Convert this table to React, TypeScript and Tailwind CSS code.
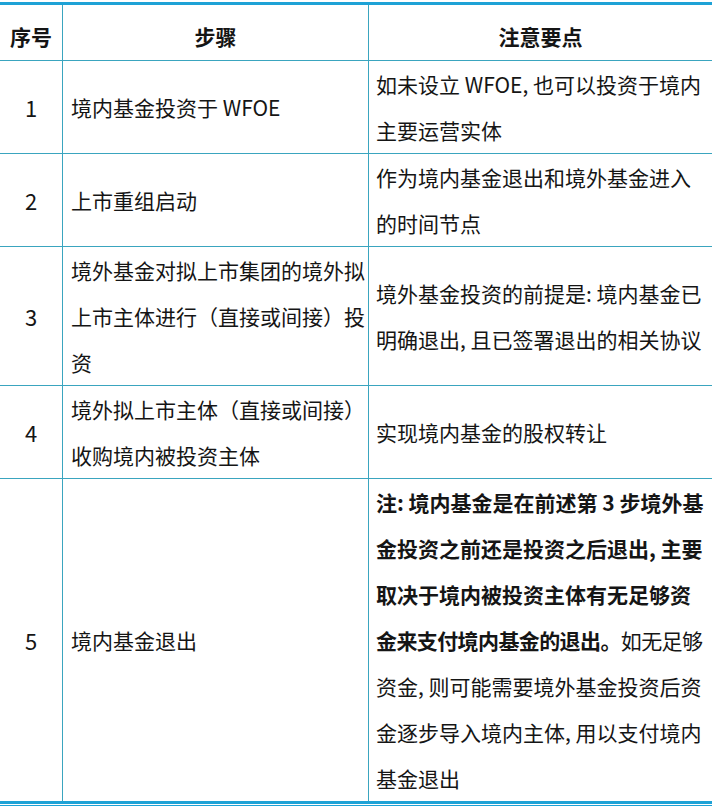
import React from "react";

const font = { fontFamily: '"Noto Sans CJK SC", "Noto Sans", sans-serif' };

function Lines({ lines }: { lines: React.ReactNode[] }) {
  return (
    <div>
      {lines.map((l, i) => (
        <div key={i} className="whitespace-nowrap">
          {l}
        </div>
      ))}
    </div>
  );
}

type Row = { n: string; step: React.ReactNode[]; note: React.ReactNode[] };

const rows: Row[] = [
  {
    n: "1",
    step: ["境内基金投资于 WFOE"],
    note: ["如未设立 WFOE, 也可以投资于境内", "主要运营实体"],
  },
  {
    n: "2",
    step: ["上市重组启动"],
    note: ["作为境内基金退出和境外基金进入", "的时间节点"],
  },
  {
    n: "3",
    step: ["境外基金对拟上市集团的境外拟", "上市主体进行（直接或间接）投", "资"],
    note: ["境外基金投资的前提是: 境内基金已", "明确退出, 且已签署退出的相关协议"],
  },
  {
    n: "4",
    step: ["境外拟上市主体（直接或间接）", "收购境内被投资主体"],
    note: ["实现境内基金的股权转让"],
  },
  {
    n: "5",
    step: ["境内基金退出"],
    note: [
      <span className="font-bold">注: 境内基金是在前述第 3 步境外基</span>,
      <span className="font-bold">金投资之前还是投资之后退出, 主要</span>,
      <span className="font-bold">取决于境内被投资主体有无足够资</span>,
      <span className="tracking-[-0.6px]">
        <span className="font-bold">金来支付境内基金的退出。</span>如无足够
      </span>,
      "资金, 则可能需要境外基金投资后资",
      "金逐步导入境内主体, 用以支付境内",
      "基金退出",
    ],
  },
];

export default function App() {
  return (
    <div
      className="w-[712px] h-[808px] bg-white text-[#151515] text-[21px] leading-[46px]"
      style={font}
    >
      <div className="h-[2px]" />
      <div className="h-[3px] bg-[#1ea2d6]" />
      <div className="grid grid-cols-[63px_306px_1fr]">
        <div className="h-[56px] border-r border-b border-[#3aa5bf] flex items-center justify-center pt-[6px] font-bold">
          序号
        </div>
        <div className="h-[56px] border-r border-b border-[#3aa5bf] flex items-center justify-center pt-[6px] font-bold">
          步骤
        </div>
        <div className="h-[56px] border-b border-[#3aa5bf] flex items-center justify-center pt-[6px] font-bold">
          注意要点
        </div>
        {rows.map((r, i) => {
          const last = i === rows.length - 1;
          const b = last ? "" : "border-b";
          return (
            <React.Fragment key={r.n}>
              <div
                className={`border-r ${b} border-[#3aa5bf] flex items-center justify-center text-[22px]`}
              >
                {r.n}
              </div>
              <div
                className={`border-r ${b} border-[#3aa5bf] flex items-center pl-[8px]`}
              >
                <Lines lines={r.step} />
              </div>
              <div className={`${b} border-[#3aa5bf] flex items-center pl-[7px]`}>
                <Lines lines={r.note} />
              </div>
            </React.Fragment>
          );
        })}
      </div>
      <div className="h-[3px] bg-[#1ea2d6]" />
      <div className="h-[1px]" />
      <div className="h-[1px] bg-[#1ea2d6]" />
    </div>
  );
}
